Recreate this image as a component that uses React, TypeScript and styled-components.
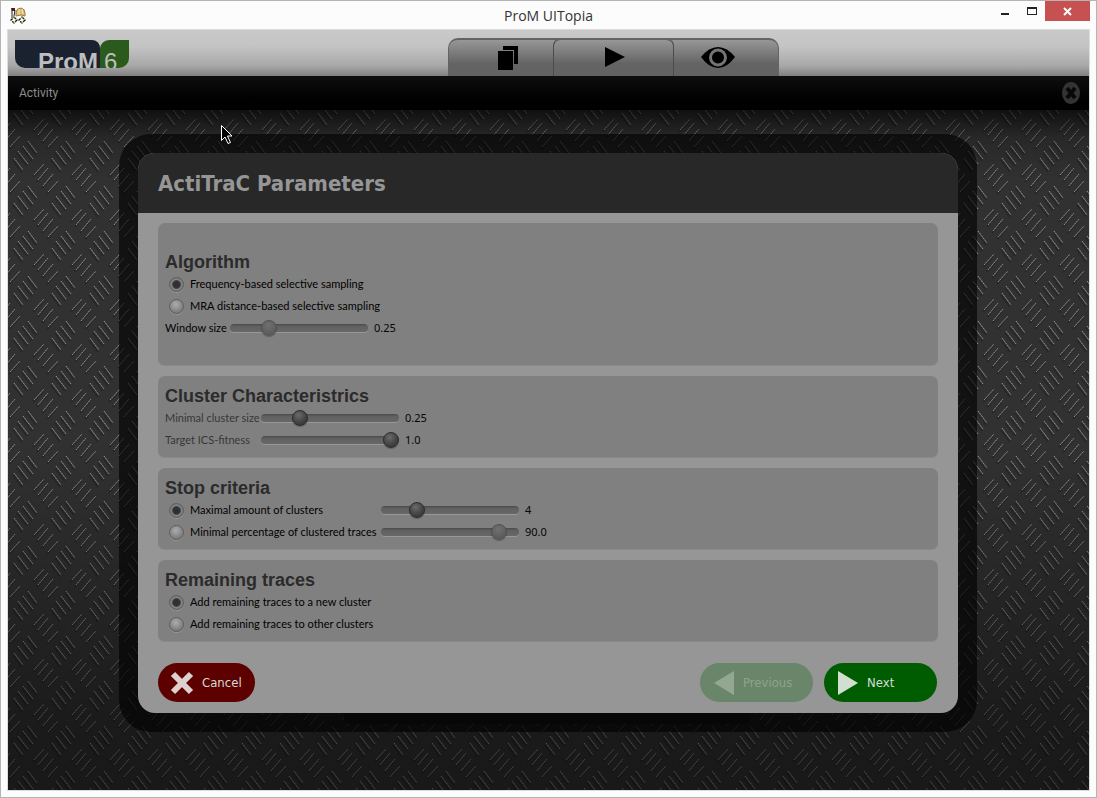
import React, { useState } from "react";
import styled, { createGlobalStyle, css } from "styled-components";

const boldFont = `"DejaVu Sans Condensed", "DejaVu Sans", sans-serif`;
const labelFont = `Lato, sans-serif`;
const barFont = `Roboto, sans-serif`;
const valueFont = `"Noto Sans", sans-serif`;

const GlobalStyle = createGlobalStyle`
  * { box-sizing: border-box; }
  body { margin: 0; background: #fbfbfb; }
  button { font: inherit; cursor: pointer; }
`;

const Window = styled.div`
  position: relative;
  display: flex;
  flex-direction: column;
  min-height: 100vh;
  padding: 0 7px 7px;
  border: 1px solid #b4b4b4;
  background: #fcfcfc;
`;

const TitleBar = styled.header`
  display: grid;
  grid-template-columns: 1fr auto 1fr;
  height: 29px;
  align-items: start;
`;

const AppIcon = styled.svg`
  width: 18px;
  height: 18px;
  margin: 5px 0 0 1px;
`;

const WindowTitle = styled.h1`
  margin: 0;
  font: 400 14px/29px "Open Sans", sans-serif;
  color: #333;
`;

const WindowControls = styled.div`
  display: flex;
  justify-content: flex-end;
  margin-right: -1px;
`;

const WindowButton = styled.button<{ $close?: boolean }>`
  width: ${(p) => (p.$close ? 45 : 27)}px;
  height: 20px;
  padding: 0;
  border: 0;
  background: ${(p) => (p.$close ? "#c75050" : "transparent")};
  svg { display: block; margin: 0 auto; }
`;

const Client = styled.div`
  flex: 1;
  display: flex;
  flex-direction: column;
  box-shadow: 0 0 0 1px #dcdcdc;
`;

const TopBar = styled.div`
  display: flex;
  height: 46px;
  background: linear-gradient(#c9c9c9 0%, #c4c4c4 35%, #a8a8a8 78%, #808080 100%);
`;

const LogoArea = styled.div`
  flex: 440 1 0;
`;

const Logo = styled.div`
  display: flex;
  height: 28px;
  margin: 10px 0 0 7px;
  font-family: "Liberation Sans", sans-serif;
  font-size: 24px;
  line-height: 44px;
  color: #bebebe;
`;

const LogoName = styled.span`
  width: 85px;
  padding-left: 23px;
  overflow: hidden;
  border-radius: 0 8px 0 10px;
  background: #1a2230;
  font-weight: 700;
`;

const LogoVersion = styled.span`
  width: 29px;
  padding-left: 4px;
  overflow: hidden;
  border-radius: 9px 0 10px 0;
  background: #2a5a1c;
`;

const Tabs = styled.nav`
  display: flex;
  align-items: flex-end;
`;

const TopSpacer = styled.div`
  flex: 310 1 0;
`;

const Tab = styled.button<{ $place: "left" | "middle" | "right" }>`
  display: flex;
  justify-content: center;
  width: ${(p) => (p.$place === "middle" ? 121 : 105)}px;
  height: 38px;
  padding: 6px 0 0;
  border: 1px solid #636363;
  border-top-width: 2px;
  border-bottom: 0;
  background: linear-gradient(#979797, #646464 66%, #626262);
  ${(p) => p.$place === "left" && css`border-right: 0; border-radius: 10px 0 0 0; padding-left: 14px;`}
  ${(p) => p.$place === "middle" && css`border-color: #4c4c4c; border-top-color: #636363; border-radius: 8px 8px 0 0; padding-left: 2px;`}
  ${(p) => p.$place === "right" && css`border-left: 0; border-radius: 0 10px 0 0; padding-right: 16px;`}
`;

const TabSeat = styled.div`
  display: flex;
  background: linear-gradient(#636363 2px, #979797 2px, #646464 66%, #626262);
`;

const ActivityBar = styled.div`
  display: flex;
  align-items: center;
  justify-content: space-between;
  height: 34px;
  padding: 0 9px 0 11px;
  background: linear-gradient(#0e0e0e, #020202 60%, #000);
  font: 400 12px/34px ${barFont};
  color: #8c8c8c;
`;

const CloseActivity = styled.button`
  display: flex;
  padding: 0;
  border: 0;
  background: transparent;
`;

const Stage = styled.main`
  position: relative;
  flex: 1;
  padding: 24px 112px 58px 111px;
  isolation: isolate;
`;

const Plate = styled.svg`
  position: absolute;
  inset: 0;
  width: 100%;
  height: 100%;
  z-index: -1;
`;

const Frame = styled.div`
  position: relative;
  padding: 19px;
  border-radius: 32px;
  background: rgba(0, 0, 0, 0.62);
  &::after {
    content: "";
    position: absolute;
    left: 225px;
    right: 227px;
    bottom: 8px;
    height: 11px;
    border-radius: 0 0 6px 6px;
    background: #070707;
  }
`;

const Dialog = styled.form`
  overflow: hidden;
  border-radius: 17px;
  background: #969696;
`;

const DialogTitle = styled.h2`
  margin: 0;
  padding: 2px 0 0 20px;
  background: #282828;
  font: 700 22px/58px ${boldFont};
  color: #969696;
`;

const DialogBody = styled.div`
  display: flex;
  flex-direction: column;
  gap: 10px;
  padding: 10px 20px 0;
`;

const Panel = styled.section<{ $roomy?: boolean }>`
  padding: ${(p) => (p.$roomy ? "28px 7px 27px" : "9px 7px 7px")};
  border-radius: 7px;
  background: #808080;
  box-shadow: inset 0 -1px 0 #8a8a8a;
`;

const PanelTitle = styled.h3`
  margin: 0;
  font: 700 18px/22px "Liberation Sans", sans-serif;
  color: #2b2b2b;
`;

const Row = styled.div`
  display: flex;
  align-items: center;
  height: 22px;
  font: 400 11px/22px ${labelFont};
  color: #050505;
`;

const RowLabel = styled.label<{ $width?: number; $muted?: boolean }>`
  display: flex;
  align-items: center;
  width: ${(p) => (p.$width ? p.$width + "px" : "auto")};
  white-space: nowrap;
  color: ${(p) => (p.$muted ? "#373737" : "#000")};
`;

const Value = styled.output`
  font-family: ${valueFont};
`;

const Radio = styled.input`
  appearance: none;
  flex: none;
  width: 15px;
  height: 15px;
  margin: 0 6px 0 4px;
  border-radius: 50%;
  border: 1px solid #5e5e5e;
  background: radial-gradient(circle at 45% 35%, #acacac, #808080 65%, #686868);
  box-shadow: 0 1px 0 #969696;
  &:checked {
    background: radial-gradient(circle, #303030 0 3px, #484848 4px, #858585 5px, #707070 7px);
  }
`;

const Slider = styled.input<{ $faded?: boolean }>`
  appearance: none;
  width: 138px;
  height: 18px;
  margin: 0 6px 0 0;
  background: transparent;
  &::-webkit-slider-runnable-track {
    height: 8px;
    border-radius: 4px;
    background: linear-gradient(#4a4a4a, #606060 30%, #686868);
    box-shadow: 0 1px 0 #989898;
  }
  &::-webkit-slider-thumb {
    appearance: none;
    width: 16px;
    height: 16px;
    margin-top: -4px;
    border-radius: 50%;
    border: 1px solid ${(p) => (p.$faded ? "#515151" : "#2c2c2c")};
    background: ${(p) =>
      p.$faded
        ? "radial-gradient(circle at 45% 30%, #707070, #5c5c5c 70%)"
        : "radial-gradient(circle at 40% 30%, #6a6a6a, #444 55%, #303030)"};
    box-shadow: 0 1px 1px rgba(0, 0, 0, 0.25);
  }
`;

const Actions = styled.footer`
  display: flex;
  gap: 11px;
  padding: 21px 21px 11px 20px;
`;

const Pill = styled.button<{ $tone: "red" | "green"; $apart?: boolean }>`
  display: flex;
  align-items: center;
  gap: 8px;
  width: ${(p) => (p.$tone === "red" ? 97 : 113)}px;
  height: 39px;
  margin-right: ${(p) => (p.$apart ? "auto" : "0")};
  padding: 0 0 0 12px;
  border: 0;
  border-radius: 20px;
  background: ${(p) => (p.$tone === "red" ? "#5c0000" : "#005c00")};
  font: 400 13px/39px ${boldFont};
  color: #d6dcd6;
  &:disabled {
    background: #6a866a;
    color: #8da38d;
  }
`;

const Pointer = styled.svg`
  position: absolute;
  left: 213px;
  top: 15px;
`;

const backStrokes = "M6 18L15 30M10 11L20 24M15 6L25 19M20 1L29 13";
const foreStrokes = "M26 35L36 24M30 40L40 28M35 46L45 34M40 52L50 41";

function DiamondPlate() {
  const groups = [
    { d: backStrokes, at: [[0, 0], [0, 45]] },
    { d: foreStrokes, at: [[0, 0], [-38, 0], [0, -45], [-38, -45]] },
  ];
  return (
    <Plate aria-hidden="true">
      <defs>
        <pattern id="plate" x="0" y="30" width="38" height="45" patternUnits="userSpaceOnUse">
          {groups.map((g) =>
            g.at.map(([x, y]) => (
              <g key={`${g.d}${x},${y}`} transform={`translate(${x} ${y})`} fill="none">
                <path d={g.d} stroke="#000" strokeOpacity="0.18" strokeWidth="2" transform="translate(-1 2)" />
                <path d={g.d} stroke="#70706c" strokeWidth="1" />
                <path d={g.d} stroke="#a4a49e" strokeWidth="1" strokeDasharray="1 2" />
              </g>
            ))
          )}
        </pattern>
        <linearGradient id="shade" x1="0" y1="0" x2="0" y2="1">
          <stop offset="0" stopColor="#000" stopOpacity="0.7" />
          <stop offset="0.04" stopColor="#000" stopOpacity="0.25" />
          <stop offset="0.1" stopColor="#000" stopOpacity="0.08" />
          <stop offset="0.5" stopColor="#000" stopOpacity="0.08" />
          <stop offset="0.9" stopColor="#000" stopOpacity="0.5" />
          <stop offset="1" stopColor="#000" stopOpacity="0.54" />
        </linearGradient>
      </defs>
      <rect width="100%" height="100%" fill="#353535" />
      <rect width="100%" height="100%" fill="url(#plate)" />
      <rect width="100%" height="100%" fill="url(#shade)" />
    </Plate>
  );
}

type SliderFieldProps = {
  id: string;
  label: string;
  labelWidth: number;
  min: number;
  max: number;
  step: number;
  initial: number;
  digits: (v: number) => string;
  faded?: boolean;
  muted?: boolean;
  radio?: { name: string; checked: boolean };
};

function SliderField(p: SliderFieldProps) {
  const [value, setValue] = useState(p.initial);
  const sliderId = `${p.id}-slider`;
  return (
    <Row>
      <RowLabel htmlFor={p.radio ? p.id : sliderId} $width={p.labelWidth} $muted={p.muted}>
        {p.radio && <Radio type="radio" id={p.id} name={p.radio.name} defaultChecked={p.radio.checked} />}
        {p.label}
      </RowLabel>
      <Slider
        type="range"
        id={sliderId}
        aria-label={p.label}
        min={p.min}
        max={p.max}
        step={p.step}
        value={value}
        onChange={(e) => setValue(Number(e.target.value))}
        $faded={p.faded}
      />
      <Value htmlFor={sliderId}>{p.digits(value)}</Value>
    </Row>
  );
}

function RadioField({ id, name, label, checked }: { id: string; name: string; label: string; checked?: boolean }) {
  return (
    <Row>
      <RowLabel htmlFor={id}>
        <Radio type="radio" id={id} name={name} defaultChecked={checked} />
        {label}
      </RowLabel>
    </Row>
  );
}

const hundredths = (v: number) => v.toFixed(2);
const tenths = (v: number) => v.toFixed(1);

export default function App() {
  return (
    <>
      <GlobalStyle />
      <Window>
        <TitleBar>
          <AppIcon viewBox="0 0 18 18" aria-hidden="true">
            <path d="M2 2h4v3H3z" fill="#4a1c1c" />
            <path d="M3 3v9M6 4l-1 6" stroke="#222" strokeWidth="1" />
            <path d="M7 10V6q1-4 5-4 4 1 4 5v3l-4-1z" fill="#d8bf78" stroke="#9a7a3c" strokeWidth="1" />
            <path d="M10 3v5M13 3l1 5" stroke="#f6e7b4" strokeWidth="1" />
            <path d="M5 11l3 3-3 3-3-3zM13 11l3 3-3 3-3-3z" fill="#fff" stroke="#222" strokeWidth="1.4" strokeDasharray="3 1" />
            <path d="M4 11h2M12 11h2M4 17h2M12 17h2" stroke="#cdbb22" strokeWidth="1" />
          </AppIcon>
          <WindowTitle>ProM UITopia</WindowTitle>
          <WindowControls>
            <WindowButton type="button" aria-label="Minimize">
              <svg width="27" height="20"><path d="M10 12h8v2h-8z" fill="#222" /></svg>
            </WindowButton>
            <WindowButton type="button" aria-label="Maximize">
              <svg width="27" height="20"><path d="M9 6h10v8H9z M10 8v5h8V8z" fillRule="evenodd" fill="#222" /></svg>
            </WindowButton>
            <WindowButton type="button" aria-label="Close" $close>
              <svg width="45" height="20"><path d="M19 7l7 7M26 7l-7 7" stroke="#fff" strokeWidth="2" /></svg>
            </WindowButton>
          </WindowControls>
        </TitleBar>
        <Client>
          <TopBar>
            <LogoArea>
              <Logo>
                <LogoName>ProM</LogoName>
                <LogoVersion>6</LogoVersion>
              </Logo>
            </LogoArea>
            <Tabs aria-label="Views">
              <Tab type="button" $place="left" aria-label="Workspace">
                <svg width="22" height="24">
                  <path d="M6 0h15v18h-4V4H6z" fill="#000" />
                  <path d="M1 5h15v19H1z" fill="#000" />
                </svg>
              </Tab>
              <TabSeat>
                <Tab type="button" $place="middle" aria-label="Actions">
                  <svg width="20" height="24"><path d="M0 1l20 10L0 21z" fill="#000" /></svg>
                </Tab>
              </TabSeat>
              <Tab type="button" $place="right" aria-label="Visualizer">
                <svg width="34" height="24">
                  <path d="M0 11Q8 1 17 1t17 10Q26 22 17 22T0 11z" fill="#000" />
                  <circle cx="17" cy="11.500" r="7.500" fill="none" stroke="#757575" strokeWidth="3" />
                </svg>
              </Tab>
            </Tabs>
            <TopSpacer />
          </TopBar>
          <ActivityBar>
            <span>Activity</span>
            <CloseActivity type="button" aria-label="Close activity">
              <svg width="18" height="22">
                <ellipse cx="9" cy="11" rx="9" ry="11" fill="#333" />
                <path d="M5 6l8 10M13 6l-8 10" stroke="#080808" strokeWidth="4" />
              </svg>
            </CloseActivity>
          </ActivityBar>
          <Stage>
            <DiamondPlate />
            <Frame>
              <Dialog onSubmit={(e) => e.preventDefault()}>
                <DialogTitle>ActiTraC Parameters</DialogTitle>
                <DialogBody>
                  <Panel $roomy>
                    <PanelTitle>Algorithm</PanelTitle>
                    <RadioField id="frequency" name="algorithm" label="Frequency-based selective sampling" checked />
                    <RadioField id="mra" name="algorithm" label="MRA distance-based selective sampling" />
                    <SliderField id="window" label="Window size" labelWidth={65} min={0} max={1} step={0.01} initial={0.25} digits={hundredths} faded />
                  </Panel>
                  <Panel>
                    <PanelTitle>Cluster Characteristrics</PanelTitle>
                    <SliderField id="size" label="Minimal cluster size" labelWidth={96} min={0} max={1} step={0.01} initial={0.25} digits={hundredths} muted />
                    <SliderField id="fitness" label="Target ICS-fitness" labelWidth={96} min={0} max={1} step={0.01} initial={1} digits={tenths} muted />
                  </Panel>
                  <Panel>
                    <PanelTitle>Stop criteria</PanelTitle>
                    <SliderField id="amount" label="Maximal amount of clusters" labelWidth={216} min={1} max={14} step={1} initial={4} digits={String} radio={{ name: "stop", checked: true }} />
                    <SliderField id="percentage" label="Minimal percentage of clustered traces" labelWidth={216} min={0} max={100} step={1} initial={90} digits={tenths} faded radio={{ name: "stop", checked: false }} />
                  </Panel>
                  <Panel>
                    <PanelTitle>Remaining traces</PanelTitle>
                    <RadioField id="new-cluster" name="remaining" label="Add remaining traces to a new cluster" checked />
                    <RadioField id="other-clusters" name="remaining" label="Add remaining traces to other clusters" />
                  </Panel>
                </DialogBody>
                <Actions>
                  <Pill type="button" $tone="red" $apart>
                    <svg width="24" height="24"><path d="M3 3l18 18M21 3L3 21" stroke="#dfd0d0" strokeWidth="6" /></svg>
                    Cancel
                  </Pill>
                  <Pill type="button" $tone="green" disabled>
                    <svg width="23" height="24"><path d="M22 0v24L2 12z" fill="#92a892" /></svg>
                    Previous
                  </Pill>
                  <Pill type="submit" $tone="green">
                    <svg width="23" height="24"><path d="M2 0v24l20-12z" fill="#d0dfd0" /></svg>
                    Next
                  </Pill>
                </Actions>
              </Dialog>
            </Frame>
            <Pointer width="12" height="20" aria-hidden="true">
              <path d="M.5 .5v15l3.500-3.500 3 6.500 2.500-1-3-6.500h4.500z" fill="#000" stroke="#fff" />
            </Pointer>
          </Stage>
        </Client>
      </Window>
    </>
  );
}
